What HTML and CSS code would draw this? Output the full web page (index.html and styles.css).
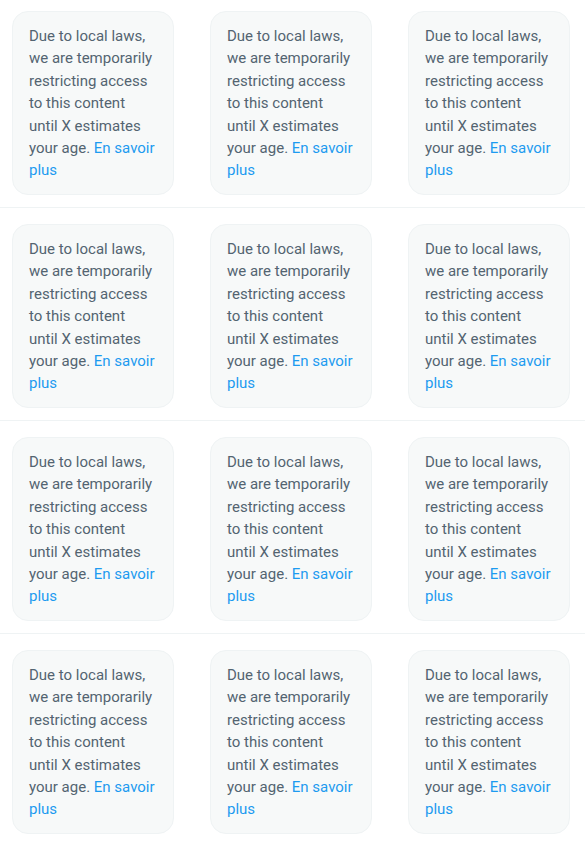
FILE: index.html
```html
<!DOCTYPE html>
<html lang="en">
<head>
<meta charset="UTF-8">
<meta name="viewport" content="width=device-width, initial-scale=1.0">
<title>Age restricted media</title>
<link rel="stylesheet" href="styles.css">
</head>
<body>
<div class="grid">
  <div class="cell"><div class="notice">Due to local laws, we are temporarily restricting access to this content until X estimates your age. <a href="#">En savoir plus</a></div></div>
  <div class="cell"><div class="notice">Due to local laws, we are temporarily restricting access to this content until X estimates your age. <a href="#">En savoir plus</a></div></div>
  <div class="cell"><div class="notice">Due to local laws, we are temporarily restricting access to this content until X estimates your age. <a href="#">En savoir plus</a></div></div>

  <div class="cell"><div class="notice">Due to local laws, we are temporarily restricting access to this content until X estimates your age. <a href="#">En savoir plus</a></div></div>
  <div class="cell"><div class="notice">Due to local laws, we are temporarily restricting access to this content until X estimates your age. <a href="#">En savoir plus</a></div></div>
  <div class="cell"><div class="notice">Due to local laws, we are temporarily restricting access to this content until X estimates your age. <a href="#">En savoir plus</a></div></div>

  <div class="cell"><div class="notice">Due to local laws, we are temporarily restricting access to this content until X estimates your age. <a href="#">En savoir plus</a></div></div>
  <div class="cell"><div class="notice">Due to local laws, we are temporarily restricting access to this content until X estimates your age. <a href="#">En savoir plus</a></div></div>
  <div class="cell"><div class="notice">Due to local laws, we are temporarily restricting access to this content until X estimates your age. <a href="#">En savoir plus</a></div></div>

  <div class="cell"><div class="notice">Due to local laws, we are temporarily restricting access to this content until X estimates your age. <a href="#">En savoir plus</a></div></div>
  <div class="cell"><div class="notice">Due to local laws, we are temporarily restricting access to this content until X estimates your age. <a href="#">En savoir plus</a></div></div>
  <div class="cell"><div class="notice">Due to local laws, we are temporarily restricting access to this content until X estimates your age. <a href="#">En savoir plus</a></div></div>
</div>
</body>
</html>
```

FILE: styles.css
```css
html, body {
  overflow: hidden;
}
body {
  margin: 0;
  background: #fff;
  font-family: Roboto, "Liberation Sans", sans-serif;
}
.grid {
  display: grid;
  grid-template-columns: repeat(3, 198px);
  margin-top: -5px;
}
.cell {
  padding: 16px 24px 12px 12px;
  border-bottom: 1px solid #eff3f4;
}
.notice {
  box-sizing: border-box;
  width: 162px;
  height: 184px;
  padding: 13px 16px 11px;
  background: #f7f9f9;
  border: 1px solid #eff3f4;
  border-radius: 16px;
  color: #536471;
  font-size: 15px;
  line-height: 22.4px;
}
.notice a {
  color: #1d9bf0;
  text-decoration: none;
}
```
